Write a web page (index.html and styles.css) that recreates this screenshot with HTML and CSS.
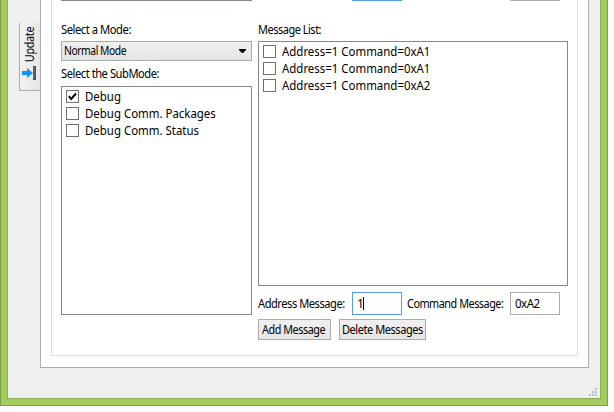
FILE: index.html
```
<!DOCTYPE html>
<html lang="en">
<head>
<meta charset="utf-8">
<title>Messages</title>
<link rel="stylesheet" href="styles.css">
</head>
<body>
<div class="window">
  <main class="client">
    <aside class="tabs">
      <div class="tab">
        <span class="tab-label">Update</span>
        <svg class="tab-icon" width="16" height="14" viewBox="0 0 16 14"><path d="M0 5h5V2l6 5L5 12V9H0z" fill="#1593f5"/><path d="M11 0h3v14h-3z" fill="#505050"/><path d="M11 2h2M11 5h2M11 8h2M11 11h2" stroke="#858585"/></svg>
      </div>
    </aside>
    <section class="panel">
      <div class="group">
        <div class="previous"><i class="edge wide"></i><i class="edge focus"></i><i class="edge"></i></div>
        <div class="columns">
          <div class="modes">
            <div class="label"><span class="t-mode">Select a Mode:</span></div>
            <div class="combo"><span class="t-normal">Normal Mode</span><svg width="7" height="4" viewBox="0 0 7 4"><path d="M0 0h7v1L4 4H3L0 1z"/></svg></div>
            <div class="label sub"><span class="t-sub">Select the SubMode:</span></div>
            <div class="list submodes">
              <div class="item"><span class="box"><svg width="11" height="11" viewBox="0 0 11 11"><path d="M1.800 5.200L4.200 8L9 2.500" fill="none" stroke="#000" stroke-width="2"/></svg></span><span class="t-item">Debug</span></div>
              <div class="item"><span class="box"></span><span class="t-item">Debug Comm. Packages</span></div>
              <div class="item"><span class="box"></span><span class="t-item">Debug Comm. Status</span></div>
            </div>
          </div>
          <div class="messages">
            <div class="label"><span class="t-list">Message List:</span></div>
            <div class="list entries">
              <div class="item"><span class="box"></span><span class="t-entry">Address=1 Command=0xA1</span></div>
              <div class="item"><span class="box"></span><span class="t-entry">Address=1 Command=0xA1</span></div>
              <div class="item"><span class="box"></span><span class="t-entry">Address=1 Command=0xA2</span></div>
            </div>
            <div class="fields">
              <div class="field-label address"><span class="t-address">Address Message:</span></div>
              <div class="input active"><span>1</span><i class="caret"></i></div>
              <div class="field-label command"><span class="t-command">Command Message:</span></div>
              <div class="input"><span class="t-value">0xA2</span></div>
            </div>
            <div class="buttons">
              <div class="button add"><span class="t-add">Add Message</span></div>
              <div class="button delete"><span class="t-delete">Delete Messages</span></div>
            </div>
          </div>
        </div>
      </div>
    </section>
    <svg class="grip" width="8" height="8" viewBox="0 0 8 8"><path d="M6 0h2v2H6zM3 3h2v2H3zM6 3h2v2H6zM0 6h2v2H0zM3 6h2v2H3zM6 6h2v2H6z" fill="#bdbdbd"/></svg>
  </main>
</div>
</body>
</html>
```
FILE: styles.css
```
* { box-sizing: border-box; }
body { margin: 0; background: #fff; color: #000; font: 12px/16px "Noto Sans", sans-serif; white-space: nowrap; overflow: hidden; }
.window { width: 608px; height: 406px; padding: 0 6px 6px; background: #a2cd5e; border: 1px solid #7f9f4c; border-top: 0; }
.client { position: relative; display: flex; width: 594px; height: 399px; background: #efefef; border: 1px solid #8bac53; border-top: 0; }
.tabs { width: 32px; padding: 23px 0 0 11px; }
.tab { display: flex; flex-direction: column; align-items: center; width: 21px; height: 68px; padding-top: 4px; border: 1px solid #acacac; border-top: 0; border-right: 0; background: linear-gradient(90deg, #f1f1f1, #e6e6e6); }
.tab-label { writing-mode: vertical-rl; transform: rotate(180deg) scaleY(.9); height: 37px; line-height: 18px; letter-spacing: -.35px; }
.tab-icon { margin-top: 2px; }
.panel { width: 549px; height: 368px; padding: 0 11px 12px 10px; background: #fff; border: 1px solid #acacac; border-top: 0; }
.group { width: 527px; height: 356px; padding-left: 9px; border: 1px solid #dcdcdc; border-top: 0; }
.previous { display: flex; height: 1px; }
.edge { width: 50px; height: 1px; background: #acacb2; }
.edge.wide { width: 191px; background: #828790; }
.edge.focus { margin: 0 108px 0 100px; background: #569de5; }
.columns { display: flex; gap: 6px; padding-top: 20px; }
.modes { width: 191px; }
.messages { width: 310px; }
.label { height: 20px; line-height: 17px; }
.label.sub { height: 25px; padding-top: 4px; }
.combo { display: flex; align-items: center; justify-content: space-between; height: 20px; padding: 0 5px 0 2px; border: 1px solid #acacac; background: linear-gradient(#f0f0f0, #e5e5e5); }
.list { border: 1px solid #828790; padding-top: 1px; background: #fff; }
.submodes { height: 229px; }
.entries { height: 245px; }
.item { display: flex; align-items: center; height: 17px; padding-left: 4px; gap: 6px; font-size: 12.500px; line-height: 17px; }
.box { width: 13px; height: 13px; border: 1px solid #707070; background: #fff; }
.box svg { display: block; }
.fields { display: flex; align-items: center; margin-top: 6px; height: 23px; }
.field-label.address { width: 94px; }
.field-label.command { width: 108px; padding-left: 5px; }
.input { display: flex; align-items: center; width: 50px; height: 23px; padding-left: 4px; border: 1px solid #abadb3; background: #fff; }
.input.active { border-color: #569de5; }
.input.active span { display: inline-block; width: 6px; }
.caret { width: 1px; height: 13px; background: #000; }
.buttons { display: flex; gap: 8px; margin-top: 4px; }
.button { display: flex; align-items: center; height: 21px; padding-left: 3px; border: 1px solid #acacac; background: linear-gradient(#f0f0f0, #e5e5e5); }
.button.add { width: 73px; }
.button.delete { width: 87px; padding-left: 2px; }
.grip { position: absolute; right: 3px; bottom: 2px; }
.t-mode, .t-normal, .t-sub, .t-list, .t-address, .t-command, .t-value, .t-add, .t-delete { display: inline-block; letter-spacing: -.5px; transform-origin: left center; }
.t-mode { transform: scaleX(.935); }
.t-normal { transform: scaleX(.86); }
.t-sub { transform: scaleX(.93); }
.t-list { transform: scaleX(.91); }
.t-address { transform: scaleX(.925); }
.t-command { transform: scaleX(.9); }
.t-value { transform: scaleX(.96); }
.t-add { transform: scaleX(.9); }
.t-delete { transform: scaleX(.92); }
.t-item, .t-entry { transform-origin: left center; transform: scaleX(.915); }
```
